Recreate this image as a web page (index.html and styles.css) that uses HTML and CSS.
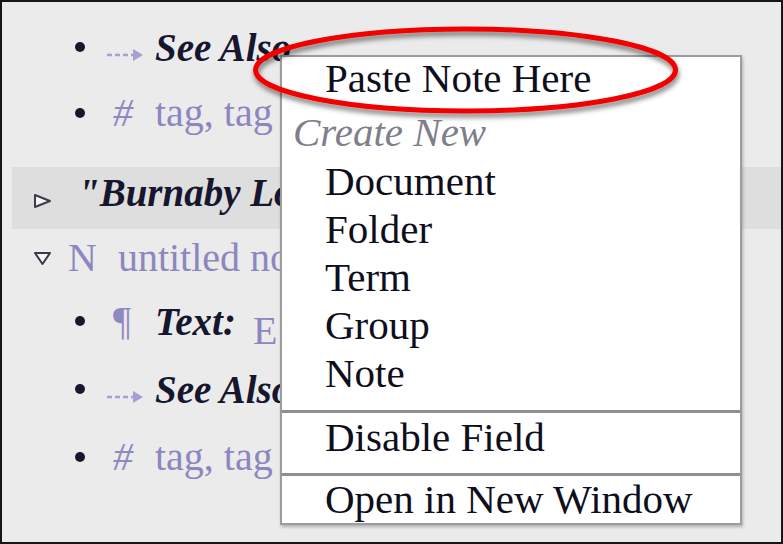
FILE: index.html
```html
<!DOCTYPE html>
<html>
<head>
<meta charset="utf-8">
<link rel="stylesheet" href="styles.css">
</head>
<body>
<div class="frame">
  <div class="row item r1">
    <span class="bullet"></span>
    <span class="icon"><svg class="arrow" width="36" height="14" viewBox="0 0 36 14"><line x1="0" y1="7" x2="27" y2="7" stroke="#a89ed2" stroke-width="2.5" stroke-dasharray="5 3"/><polygon points="26,1 36,7 26,13" fill="#a89ed2"/></svg></span>
    <span class="bi">See Also</span>
  </div>
  <div class="row item">
    <span class="bullet"></span>
    <span class="icon"><span class="glyph hash">#</span></span>
    <span class="plain">tag, tag</span>
  </div>
  <div class="row band">
    <svg class="tri tri-r" width="19" height="16" viewBox="0 0 19 16"><polygon points="2,2 17,8 2,14" fill="#f6f6f6" stroke="#3a3a4a" stroke-width="2" stroke-linejoin="round"/></svg>
    <span class="bi quote">"Burnaby Lo</span>
  </div>
  <div class="row head r4">
    <svg class="tri tri-d" width="19" height="16" viewBox="0 0 19 16"><polygon points="2,3 17,3 9.5,14" fill="#f6f6f6" stroke="#3a3a4a" stroke-width="2" stroke-linejoin="round"/></svg>
    <span class="plain ntype">N</span>
    <span class="plain ntitle">untitled no</span>
  </div>
  <div class="row item tall">
    <span class="bullet"></span>
    <span class="icon"><span class="glyph">¶</span></span>
    <span class="bi">Text:</span>
    <span class="plain val">E</span>
  </div>
  <div class="row item tall r1">
    <span class="bullet"></span>
    <span class="icon"><svg class="arrow" width="36" height="14" viewBox="0 0 36 14"><line x1="0" y1="7" x2="27" y2="7" stroke="#a89ed2" stroke-width="2.5" stroke-dasharray="5 3"/><polygon points="26,1 36,7 26,13" fill="#a89ed2"/></svg></span>
    <span class="bi">See Also</span>
  </div>
  <div class="row item tall">
    <span class="bullet"></span>
    <span class="icon"><span class="glyph hash">#</span></span>
    <span class="plain">tag, tag</span>
  </div>
  <div class="row head r8">
    <svg class="tri tri-d" width="19" height="16" viewBox="0 0 19 16"><polygon points="2,3 17,3 9.5,14" fill="#f6f6f6" stroke="#3a3a4a" stroke-width="2" stroke-linejoin="round"/></svg>
    <span class="bi quote2">"The source</span>
  </div>

  <div class="menu">
    <div class="sec">
      <div class="mi paste">Paste Note Here</div>
      <div class="mi mhead">Create New</div>
      <div class="mi">Document</div>
      <div class="mi">Folder</div>
      <div class="mi">Term</div>
      <div class="mi">Group</div>
      <div class="mi">Note</div>
    </div>
    <div class="sec sec2">
      <div class="mi">Disable Field</div>
    </div>
    <div class="sec sec3">
      <div class="mi last">Open in New Window</div>
    </div>
  </div>

  <svg class="ring" width="779" height="540" viewBox="0 0 779 540">
    <defs>
      <filter id="sh" x="-10%" y="-30%" width="120%" height="170%">
        <feDropShadow dx="1" dy="4" stdDeviation="2.5" flood-color="#000" flood-opacity="0.5"/>
      </filter>
    </defs>
    <ellipse cx="463.5" cy="68" rx="210" ry="41" fill="none" stroke="#f20000" stroke-width="5" filter="url(#sh)"/>
  </svg>
</div>
</body>
</html>
```
FILE: styles.css
```css
* { box-sizing: border-box; }
body { margin: 0; }

.frame {
  position: relative;
  width: 783px;
  height: 544px;
  border: 2px solid #161616;
  background: #ebebeb;
  overflow: hidden;
  padding-top: 12px;
  font-family: "Liberation Serif", "Times New Roman", serif;
}

.row {
  display: flex;
  align-items: center;
  white-space: nowrap;
}

.item { height: 66px; padding-left: 73px; }
.item.tall { height: 68px; }

.bullet {
  flex: none;
  width: 10px;
  height: 10px;
  border-radius: 50%;
  background: #18182c;
}

.icon {
  flex: none;
  width: 48px;
  margin-left: 22px;
  display: flex;
  align-items: center;
}

.arrow { margin-top: 16px; }

.glyph {
  font-size: 40px;
  line-height: 1;
  color: #8f89c2;
  padding-left: 6px;
}
.glyph.hash { font-style: italic; }

.bi {
  font-size: 39px;
  line-height: 1;
  font-weight: bold;
  font-style: italic;
  color: #16162e;
}

.plain {
  font-size: 40px;
  line-height: 1;
  color: #8c87bf;
}

.val { margin-left: 17px; padding-top: 20px; }

.band {
  margin-top: 21px;
  margin-left: 10px;
  height: 62px;
  padding-left: 21px;
  padding-bottom: 12px;
  background: #dedede;
}

.tri { flex: none; }
.tri-r { margin-top: 18px; }
.quote { margin-left: 26px; }

.head { padding-left: 31px; }
.r4 { height: 58px; }
.ntype { margin-left: 16px; }
.ntitle { margin-left: 21px; }

.r8 { height: 68px; margin-top: 33px; }
.quote2 { margin-left: 24px; }

.menu {
  position: absolute;
  left: 278px;
  top: 53px;
  width: 462px;
  background: #fff;
  border: 2px solid #9c9c9c;
  box-shadow: 1px 2px 3px rgba(0, 0, 0, 0.25);
  font-size: 41px;
  color: #0e0e1c;
}

.sec { padding-bottom: 13px; }
.sec + .sec { border-top: 3px solid #8f8f8f; }
.sec2 { padding-bottom: 12px; }
.sec3 { padding-bottom: 0; }

.mi {
  padding-left: 43px;
  height: 48px;
  line-height: 48px;
  white-space: nowrap;
}
.mi.paste { height: 51px; line-height: 43px; }
.mi.mhead {
  padding-left: 11px;
  height: 49px;
  line-height: 49px;
  font-style: italic;
  color: #7f7f8c;
}
.mi.last { height: 47px; line-height: 46px; }

.ring {
  position: absolute;
  left: 0;
  top: 0;
  pointer-events: none;
}
```
